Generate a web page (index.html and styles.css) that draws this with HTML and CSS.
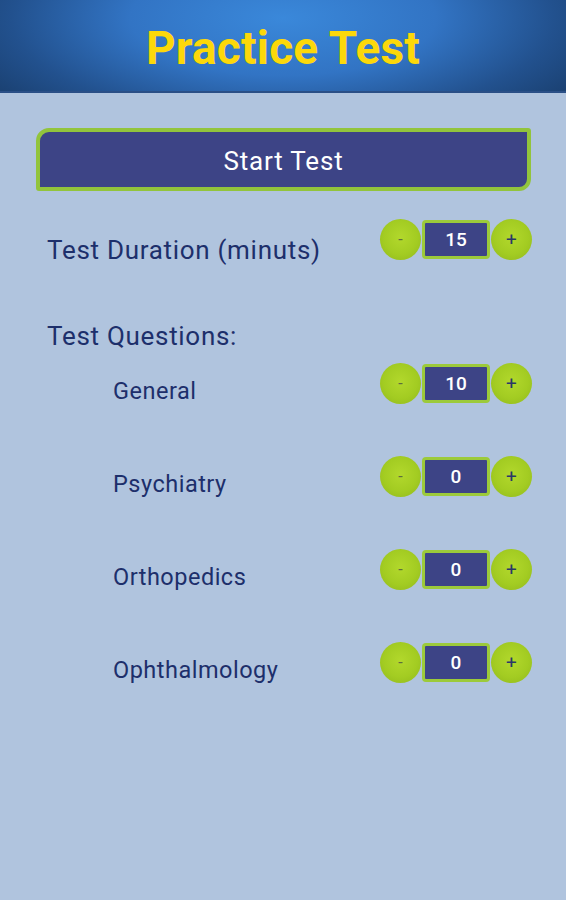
FILE: index.html
```html
<!DOCTYPE html>
<html lang="en">
<head>
    <meta charset="UTF-8">
    <meta name="viewport" content="width=device-width, initial-scale=1.0">
    <title>Practice Test</title>
    <link rel="stylesheet" href="styles.css">
</head>
<body>
    <header class="header">
        <h1>Practice Test</h1>
    </header>

    <main class="content">
        <button class="start-btn">Start Test</button>

        <div class="row duration-row">
            <div class="label">Test Duration (minuts)</div>
            <div class="stepper">
                <button class="step minus">-</button>
                <div class="value">15</div>
                <button class="step plus">+</button>
            </div>
        </div>

        <div class="section-title">Test Questions:</div>

        <div class="questions">
            <div class="row">
                <div class="label sub">General</div>
                <div class="stepper">
                    <button class="step minus">-</button>
                    <div class="value">10</div>
                    <button class="step plus">+</button>
                </div>
            </div>
            <div class="row">
                <div class="label sub">Psychiatry</div>
                <div class="stepper">
                    <button class="step minus">-</button>
                    <div class="value">0</div>
                    <button class="step plus">+</button>
                </div>
            </div>
            <div class="row">
                <div class="label sub">Orthopedics</div>
                <div class="stepper">
                    <button class="step minus">-</button>
                    <div class="value">0</div>
                    <button class="step plus">+</button>
                </div>
            </div>
            <div class="row">
                <div class="label sub">Ophthalmology</div>
                <div class="stepper">
                    <button class="step minus">-</button>
                    <div class="value">0</div>
                    <button class="step plus">+</button>
                </div>
            </div>
        </div>
    </main>
</body>
</html>
```

FILE: styles.css
```css
* {
    margin: 0;
    padding: 0;
    box-sizing: border-box;
    font-family: Roboto, "Liberation Sans", sans-serif;
}

body {
    background-color: #b0c4de;
    height: 100vh;
    color: #1d2f6b;
}

.header {
    height: 93px;
    padding-top: 5px;
    background: radial-gradient(ellipse 60% 140% at 50% 20%, #3a88da 0%, #3274c4 45%, #22518e 80%, #1b4274 100%);
    border-bottom: 2px solid #2a4f86;
    display: flex;
    justify-content: center;
    align-items: center;
}

.header h1 {
    color: #fcd80a;
    font-size: 46px;
    font-weight: bold;
    letter-spacing: 0.2px;
}

.content {
    padding: 35px 35px 0 36px;
}

.start-btn {
    display: block;
    width: 100%;
    height: 63px;
    padding-top: 3px;
    background-color: #3d4486;
    border: 4px solid #92c43c;
    border-radius: 13px 3px 12px 3px;
    color: white;
    font-size: 26px;
    letter-spacing: 0.8px;
    cursor: pointer;
}

.row {
    display: flex;
    justify-content: space-between;
    align-items: flex-start;
}

.duration-row {
    margin-top: 28px;
}

.label {
    font-size: 26px;
    letter-spacing: 0.7px;
    line-height: 30px;
    padding: 16px 0 0 11px;
}

.label.sub {
    font-size: 23.5px;
    letter-spacing: 0.5px;
    padding: 13px 0 0 77px;
}

.section-title {
    font-size: 26px;
    letter-spacing: 0.7px;
    line-height: 30px;
    padding-left: 11px;
    margin-top: 56px;
}

.questions {
    display: flex;
    flex-direction: column;
    gap: 50px;
    margin-top: 12px;
}

.stepper {
    display: flex;
    align-items: center;
    margin-right: -1px;
}

.step {
    width: 41px;
    height: 41px;
    border: none;
    border-radius: 50%;
    background: radial-gradient(circle at 50% 45%, #b2d82c 0%, #a3cc22 55%, #8fb71c 100%);
    font-size: 16px;
    cursor: pointer;
}

.step.minus {
    color: #5f6d3e;
}

.step.plus {
    color: #2b3868;
    font-size: 19px;
}

.value {
    width: 68px;
    height: 39px;
    margin: 0 1px;
    background-color: #3d4486;
    border: 3px solid #9cca3a;
    border-radius: 4px;
    color: white;
    font-size: 19px;
    font-weight: 500;
    display: flex;
    justify-content: center;
    align-items: center;
}
```
